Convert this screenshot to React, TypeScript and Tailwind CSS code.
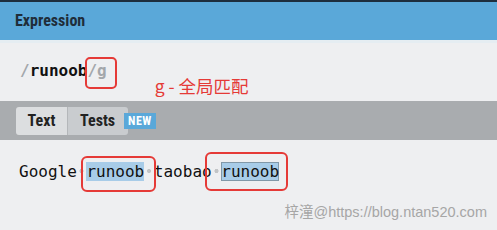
const mono = "font-['DejaVu_Sans_Mono','Liberation_Mono',monospace]";
const ui = "font-['Roboto_Condensed','Liberation_Sans_Narrow','Roboto',sans-serif]";

function Dot() {
  return (
    <span className="inline-block w-[1ch] h-[4px] align-[4.5px] bg-[radial-gradient(circle,#c2c4c6_1.8px,transparent_2.3px)]" />
  );
}

export default function App() {
  return (
    <div className="relative w-[497px] h-[230px] overflow-hidden bg-[#eeeff1] font-['Roboto',sans-serif]">
      <div className="h-[2px] bg-[#1d2e3e]" />
      <div className={`h-[38px] bg-[#5aa8d9] flex items-center pl-[15px] text-[16px] font-bold text-[#1f2d3a] ${ui}`}>
        Expression
      </div>
      <div className="h-[3px] bg-[#e5edf2]" />

      {/* expression row */}
      <div className="h-[58px] flex items-start pl-[20px] pt-[18px]">
        <span className={`${mono} text-[16px] leading-[19px] font-bold text-[#111]`}>
          <span className="text-[#a3a7ab]">/</span>runoob
          <span className="relative inline-block">
            <span className="text-[#a3a7ab]">/g</span>
            <span className="absolute -left-[2px] -right-[10px] -top-[4px] -bottom-[9px] border-2 border-[#e53a37] rounded-[5px]" />
          </span>
        </span>
        <span className="ml-[48px] mt-[15px] text-[17.5px] leading-[20px] text-[#e53a37] font-['Noto_Sans_CJK_SC',sans-serif]">
          g - 全局匹配
        </span>
      </div>

      {/* tabs */}
      <div className={`h-[39px] bg-[#a9acaf] pl-[16px] pt-[6px] ${ui}`}>
        <div className="flex h-[28px] text-[16px] font-bold text-[#222]">
          <div className="w-[52px] flex items-center justify-center bg-[#dcdee0] rounded-l-[3px] border-r border-[#b4b7ba]">
            Text
          </div>
          <div className="w-[60px] flex items-center pl-[12px] bg-[#c9cccf] rounded-r-[3px]">
            <span>Tests</span>
            <span className="ml-[9px] shrink-0 h-[16px] px-[4px] flex items-center bg-[#5aa8d9] text-white text-[12px] font-bold tracking-[0.5px] leading-none">
              NEW
            </span>
          </div>
        </div>
      </div>

      {/* text */}
      <div className={`pl-[19px] pt-[22px] ${mono} text-[16px] leading-[19px] text-[#111] whitespace-nowrap`}>
        Google
        <Dot />
        <span className="relative bg-[#a8cce8]">
          runoob
          <span className="absolute -left-[5px] -right-[12px] -top-[6px] -bottom-[11px] border-2 border-[#e53a37] rounded-[6px]" />
        </span>
        <Dot />
        taobao
        <Dot />
        <span className="relative bg-[#a8cce8] shadow-[inset_0_0_0_1px_#8198a8]">
          runoob
          <span className="absolute -left-[16px] -right-[9px] -top-[10px] -bottom-[10px] border-2 border-[#e53a37] rounded-[6px]" />
        </span>
      </div>

      <div className="absolute right-[10px] top-[202px] text-[14.5px] leading-[20px] text-[#a6a6a6] font-['Liberation_Sans','Noto_Sans_CJK_SC',sans-serif]">
        梓潼@https://blog.ntan520.com
      </div>
    </div>
  );
}
